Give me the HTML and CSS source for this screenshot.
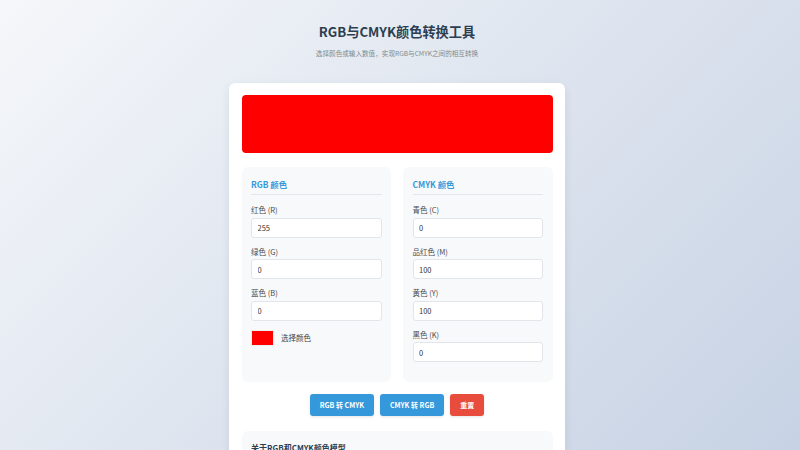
FILE: index.html
```html
<!DOCTYPE html>
<html lang="zh-CN">
<head>
<meta charset="utf-8">
<title>RGB与CMYK颜色转换工具</title>
<link rel="stylesheet" href="styles.css">
</head>
<body>

<div class="header">
  <h1>RGB与CMYK颜色转换工具</h1>
  <p class="subtitle">选择颜色或输入数值，实现RGB与CMYK之间的相互转换</p>
</div>

<div class="card">
  <div class="preview" id="preview"></div>

  <div class="panels">
    <!-- RGB -->
    <div class="panel">
      <h2>RGB 颜色</h2>
      <div class="field">
        <label>红色 (R)</label>
        <input type="text" value="255">
      </div>
      <div class="field">
        <label>绿色 (G)</label>
        <input type="text" value="0">
      </div>
      <div class="field">
        <label>蓝色 (B)</label>
        <input type="text" value="0">
      </div>
      <div class="picker">
        <span class="swatch"></span>
        <span>选择颜色</span>
      </div>
    </div>

    <!-- CMYK -->
    <div class="panel">
      <h2>CMYK 颜色</h2>
      <div class="field">
        <label>青色 (C)</label>
        <input type="text" value="0">
      </div>
      <div class="field">
        <label>品红色 (M)</label>
        <input type="text" value="100">
      </div>
      <div class="field">
        <label>黄色 (Y)</label>
        <input type="text" value="100">
      </div>
      <div class="field">
        <label>黑色 (K)</label>
        <input type="text" value="0">
      </div>
    </div>
  </div>

  <div class="actions">
    <button class="btn">RGB 转 CMYK</button>
    <button class="btn">CMYK 转 RGB</button>
    <button class="btn btn-reset">重置</button>
  </div>

  <div class="info">
    <h3>关于RGB和CMYK颜色模型</h3>
    <p>RGB是加色模型，通过红、绿、蓝三种光的叠加来显示颜色，常用于显示器和屏幕。</p>
    <p>CMYK是减色模型，由青、品红、黄、黑四种油墨组成，主要用于印刷行业。</p>
    <p>两种模型的色域不同，转换时可能会有轻微的色差。</p>
  </div>
</div>

</body>
</html>
```

FILE: styles.css
```css
body {
  margin: 0;
  padding: 12.5px 18.5px 12.5px 12.5px;
  min-height: 100vh;
  box-sizing: border-box;
  font-family: "Noto Sans CJK SC", "Noto Sans", sans-serif;
  background: linear-gradient(135deg, #f5f7fa 0%, #c3cfe2 100%);
  color: #333;
}

/* Title block */
.header {
  text-align: center;
}

.header h1 {
  margin: 10px 0 7px;
  font-size: 13.2px;
  line-height: 18px;
  color: #2c3e50;
}

.subtitle {
  margin: 0 0 24px;
  font-size: 6.6px;
  line-height: 11px;
  color: #7f8c8d;
}

/* Main card */
.card {
  width: 336px;
  box-sizing: border-box;
  margin: 0 auto;
  padding: 12.5px;
  background: white;
  border-radius: 6px;
  box-shadow: 0 3px 10px rgba(0,0,0,0.08);
}

.preview {
  height: 58px;
  background: #ff0000;
  border-radius: 4px;
  margin-bottom: 14px;
}

.panels {
  display: grid;
  grid-template-columns: 1fr 1fr;
  gap: 12px;
}

.panel {
  background: #f8f9fa;
  border-radius: 6px;
  padding: 9.5px 9.5px 12px;
}

.panel h2 {
  margin: 0 0 9px;
  padding-bottom: 3.5px;
  font-size: 8.4px;
  line-height: 14px;
  color: #3498db;
  border-bottom: 1px solid #e3e6ea;
}

.field {
  margin-bottom: 8px;
}

.field label {
  display: block;
  font-size: 7.5px;
  line-height: 11px;
  color: #4a4a4a;
  margin-bottom: 2.5px;
}

.field input {
  display: block;
  width: 100%;
  height: 20px;
  box-sizing: border-box;
  padding: 0 5.5px;
  border: 1px solid #e2e5e9;
  border-radius: 3px;
  background: white;
  font-family: inherit;
  font-size: 7.5px;
  color: #333;
}

.picker {
  display: flex;
  align-items: center;
  gap: 7px;
  margin-top: 9px;
  font-size: 7.5px;
  color: #444;
}

.swatch {
  width: 23px;
  height: 16px;
  background: #ff0000;
  border: 1px solid #eee;
  box-sizing: border-box;
}

/* Buttons */
.actions {
  display: flex;
  justify-content: center;
  gap: 6px;
  margin: 12px 0 15px;
}

.btn {
  height: 22px;
  padding: 0 10px;
  border: none;
  border-radius: 3px;
  background: #3498db;
  color: white;
  font-family: inherit;
  font-size: 7px;
  font-weight: bold;
  box-shadow: 0 1px 3px rgba(0,0,0,0.1);
}

.btn-reset {
  background: #e74c3c;
}

/* Info box */
.info {
  background: #f8f9fa;
  border-radius: 6px;
  padding: 9.5px;
}

.info h3 {
  margin: 0 0 6px;
  font-size: 8px;
  line-height: 13px;
  color: #2c3e50;
}

.info p {
  margin: 0 0 5px;
  font-size: 7px;
  line-height: 13px;
  color: #555;
}
```
